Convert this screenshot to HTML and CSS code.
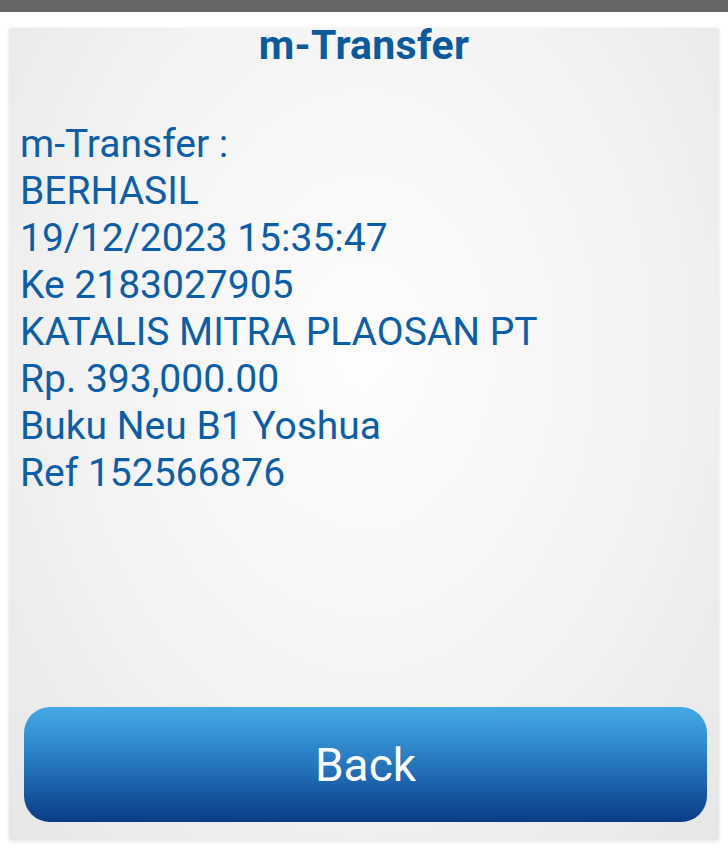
FILE: index.html
```html
<!DOCTYPE html>
<html lang="id">
<head>
  <meta charset="UTF-8" />
  <meta name="viewport" content="width=device-width, initial-scale=1.0" />
  <title>m-Transfer</title>
  <link rel="stylesheet" href="styles.css">
</head>
<body>

  <!-- status bar strip -->
  <div class="topbar"></div>

  <div class="card">
    <h1 class="title">m-Transfer</h1>

    <div class="result">
      <p>m-Transfer :</p>
      <p>BERHASIL</p>
      <p>19/12/2023 15:35:47</p>
      <p>Ke 2183027905</p>
      <p>KATALIS MITRA PLAOSAN PT</p>
      <p>Rp. 393,000.00</p>
      <p>Buku Neu B1 Yoshua</p>
      <p>Ref 152566876</p>
    </div>

    <button class="back-btn">Back</button>
  </div>

</body>
</html>
```

FILE: styles.css
```css
body {
  margin: 0;
  background: #fff;
  font-family: Roboto, "Noto Sans", sans-serif;
  height: 851px;
  overflow: hidden;
}
.topbar {
  height: 12px;
  background: #666;
}
.card {
  margin: 16px 9px 0 9px;
  height: 812px;
  display: flex;
  flex-direction: column;
  background: radial-gradient(ellipse at 50% 40%, #fdfdfd 0%, #f3f3f3 55%, #e6e6e6 100%);
  box-shadow: 0 1px 4px rgba(0, 0, 0, 0.12);
  border-radius: 3px;
}
.title {
  margin: 0;
  text-align: center;
  font-size: 41px;
  font-weight: 700;
  color: #0a5a9c;
  letter-spacing: 0.3px;
  line-height: 34px;
}
.result {
  margin-top: 59px;
  padding-left: 11px;
  color: #0d5ea8;
  font-size: 39px;
  line-height: 47px;
}
.result p {
  margin: 0;
}
.back-btn {
  margin: auto 12px 18px 15px;
  height: 115px;
  border: none;
  border-radius: 26px;
  background: linear-gradient(to bottom, #45a9e5 0%, #2f87cb 35%, #1a5ea8 70%, #0a3c85 100%);
  color: #fff;
  font-family: Roboto, "Noto Sans", sans-serif;
  font-size: 46px;
  cursor: pointer;
}
```
